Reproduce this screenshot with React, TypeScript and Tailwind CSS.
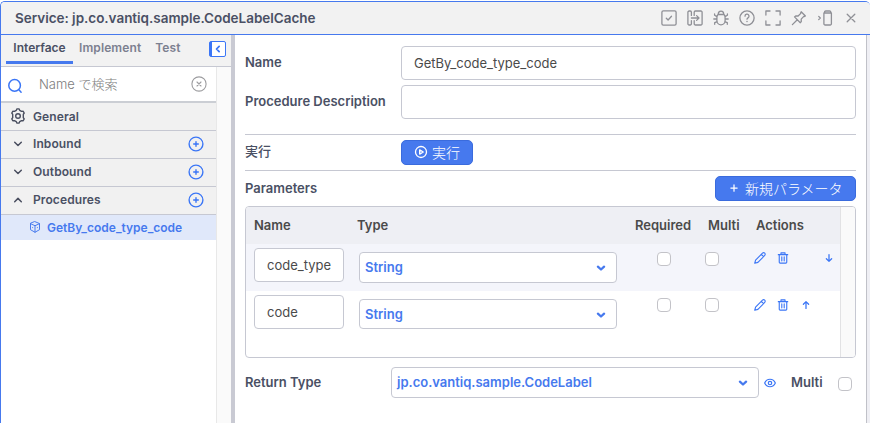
import React from "react";

type IconProps = { children: React.ReactNode; className?: string; size?: number; sw?: number };

function Icon({ children, className = "", size = 16, sw = 1.3 }: IconProps) {
  return (
    <svg
      viewBox="0 0 16 16"
      width={size}
      height={size}
      fill="none"
      stroke="currentColor"
      strokeWidth={sw}
      strokeLinecap="round"
      strokeLinejoin="round"
      className={"shrink-0 " + className}
    >
      {children}
    </svg>
  );
}

function HeaderIcons() {
  return (
    <div className="flex items-center gap-2.5 text-[#8f9096]">
      <Icon>
        <rect x="0.9" y="0.9" width="14.2" height="14.2" rx="1.4" />
        <path d="M5.3 8.2l1.8 1.8 3.4-3.8" />
      </Icon>
      <Icon>
        <path d="M4.4 5.400V2.200A1.200 1.200 0 0 0 3.200 1H2.100A1.200 1.200 0 0 0 .9 2.200v11.600A1.200 1.200 0 0 0 2.100 15h1.100a1.200 1.200 0 0 0 1.200-1.200v-3.200" />
        <path d="M7.200 5.400V2.200A1.200 1.200 0 0 1 8.400 1h5.500a1.200 1.200 0 0 1 1.200 1.200v11.600a1.200 1.200 0 0 1-1.200 1.200H8.400a1.200 1.200 0 0 1-1.200-1.200v-3.200M4.400 8H12M9.600 5.600 12 8l-2.400 2.400" />
      </Icon>
      <Icon>
        <path d="M5.200 4.500a2.800 3.300 0 0 1 5.600 0M5 4.500h6a4 4 0 0 1 1.100 3v3.200a4.100 4.100 0 0 1-8.200 0V7.500A4 4 0 0 1 5 4.500zM3.900 6.600 1.600 5.300V3.900M12.100 6.600l2.300-1.300V3.900M3.900 9H.8M12.100 9h3.100M4.200 11.600l-2.500 1v1.700M11.800 11.600l2.500 1v1.700" />
      </Icon>
      <Icon>
        <circle cx="8" cy="8" r="7.100" />
        <path d="M6 6.200a2 2 0 1 1 3 1.700c-.6.400-1 .7-1 1.300" />
        <path d="M8 11.400v.1" strokeWidth="1.500" />
      </Icon>
      <Icon>
        <path d="M.9 5V1H5M11 1h4.100v4M15.100 11v4H11M5 15H.9v-4" />
      </Icon>
      <Icon>
        <path d="M10.200 1.800l4.200 4.200-1 .5-.6-.1-2.600 2.700.1 2.400-1 1.200-5.800-5.800 1.200-1 2.400.1 2.700-2.600-.1-.6zM6.300 9.800 1.400 14.600" />
      </Icon>
      <Icon>
        <path d="M6.900 3h7.500v10.800a1.200 1.200 0 0 1-1.200 1.200H8.100a1.200 1.200 0 0 1-1.200-1.200zM7.600 3V2.100A1.100 1.100 0 0 1 8.700 1h3.900a1.100 1.100 0 0 1 1.100 1.100V3M1.700 6.400 3.300 8 1.700 9.600" />
      </Icon>
      <Icon>
        <path d="M4.200 4.200l7.600 7.600M11.800 4.200l-7.600 7.600" />
      </Icon>
    </div>
  );
}

function CirclePlus() {
  return (
    <Icon className="-mt-px text-[#3b76f6]" sw={1.4}>
      <circle cx="8" cy="8" r="6.900" />
      <path d="M8 5.700v4.600M5.700 8h4.600" />
    </Icon>
  );
}

function Section({ label, open }: { label: string; open?: boolean }) {
  return (
    <div className="flex h-7 items-center border-b border-[#c6c8d2] bg-[#f1f1f1] pl-[9px] pr-3">
      <Icon className="-mt-0.5 text-[#4a4f60]" sw={1.5}>
        {open ? <path d="M4.700 9.700 8 6.400l3.300 3.300" /> : <path d="M4.700 6.200 8 9.500l3.300-3.300" />}
      </Icon>
      <span className="-mt-px ml-[7px] flex-1 text-[12px] font-semibold tracking-[0.1px]">{label}</span>
      <CirclePlus />
    </div>
  );
}

function Check({ className = "" }: { className?: string }) {
  return <span className={"block size-[14px] shrink-0 rounded-[4px] border border-[#c3c3c8] bg-white " + className} />;
}

function Select({ value, className }: { value: string; className: string }) {
  return (
    <div className={"flex items-center justify-between rounded-[4px] border border-[#c6c8d2] bg-white pl-[5px] text-[13px] font-semibold text-[#4679ee] " + className}>
      <span>{value}</span>
      <Icon sw={2.300} className="mr-[7px]">
        <path d="M4.900 6.700 8 9.500l3.100-2.800" />
      </Icon>
    </div>
  );
}

function Pencil() {
  return (
    <Icon size={12} sw={1.500} className="text-[#3b76f6]">
      <path d="M1 15l1.100-4.300L11.300 1.600a2.100 2.100 0 0 1 3 3L5.200 13.800zM9.800 3.200l2.900 2.900" />
    </Icon>
  );
}

function Trash() {
  return (
    <Icon size={12} sw={1.500} className="text-[#3b76f6]">
      <path d="M1.700 3.500h12.600M5.300 3.300V1.200h5.400v2.100M3 3.700v10a1.200 1.200 0 0 0 1.200 1.200h7.600a1.200 1.200 0 0 0 1.200-1.200v-10M6.400 6.500v5.300M9.600 6.500v5.300" />
    </Icon>
  );
}

function ParamRow({ name, down }: { name: string; down?: boolean }) {
  return (
    <div className={"flex items-start pl-2 pt-1 " + (down ? "h-[47px] bg-[#f4f5fb]" : "h-[66px]")}>
      <div className="flex h-[34px] w-[90px] items-center rounded-[4px] border border-[#c6c8d2] bg-white pl-3 pt-px text-[13px] font-normal text-[#4a4a4a]">
        {name}
      </div>
      <Select value="String" className={"ml-[15px] mt-1 w-[258px] " + (down ? "h-[31px]" : "h-[30px] pt-px")} />
      <Check className={"ml-10 " + (down ? "mt-1" : "mt-[3px]")} />
      <Check className={"ml-[34px] " + (down ? "mt-1" : "mt-[3px]")} />
      <div className="ml-[34.5px] mt-[3px] flex w-[82px] items-center gap-[11px]">
        <Pencil />
        <Trash />
        <Icon size={12} sw={1.700} className={"text-[#3b76f6] " + (down ? "ml-[23px] mt-px" : "mt-px")}>
          {down ? <path d="M8 3.400v9M4.500 9 8 12.500 11.500 9" /> : <path d="M8 12.500v-9M4.500 7 8 3.500 11.500 7" />}
        </Icon>
      </div>
    </div>
  );
}

function Sidebar() {
  return (
    <aside className="flex w-[230px] shrink-0 flex-col">
      <div className="flex h-8 shrink-0 items-start border-b border-[#c6c8d2] bg-[#f2f2f2] pl-[5px] pr-[5px] text-[12px] font-semibold text-[#7c8090]">
        <div className="flex h-[29px] w-[67px] justify-center border-b-[3px] border-[#4679ee] pt-1 text-[#4a5064]">Interface</div>
        <span className="ml-[6px] pt-1 tracking-[0.1px]">Implement</span>
        <span className="ml-[14px] pt-1 tracking-[0.1px]">Test</span>
        <div className="ml-auto mt-[6px] flex h-4 w-[17px] items-center rounded-[2px] border border-[#3b76f6] bg-white text-[#3b76f6]">
          <span className="h-full w-[4px] bg-[#3b76f6]" />
          <Icon size={14} sw={2} className="-ml-px"><path d="M9.300 5 6.300 8l3 3" /></Icon>
        </div>
      </div>
      <div className="flex min-h-0 flex-1">
        <div className="w-[215px]">
          <div className="flex h-9 items-center border-b-2 border-[#cbced4] pl-[6px] pr-[9px]">
            <Icon className="mt-1 text-[#3b76f6]" sw={1.500}>
              <circle cx="7.600" cy="7.400" r="5.800" />
              <path d="M11.900 11.800l2.200 2.400" />
            </Icon>
            <span className="ml-4 flex-1 pt-px text-[13px] font-light text-[#7d7d7d]">Name で検索</span>
            <Icon className="text-[#9d9da0]" sw={1.100}>
              <circle cx="8" cy="8" r="7.100" />
              <path d="M6 6l4 4M10 6l-4 4" />
            </Icon>
          </div>
          <div className="flex h-7 items-center border-b border-[#c6c8d2] bg-[#f1f1f1] pl-[9px]">
            <Icon sw={1.400} className="-mt-px text-[#4a4f60]">
              <path d="M6.300 2.300 7 .9h2l.7 1.400 1.900 1.100 1.600-.1 1 1.700-.9 1.300v3.400l.9 1.300-1 1.700-1.600-.1-1.900 1.100L9 15.100H7l-.7-1.400-1.900-1.100-1.600.1-1-1.700.9-1.300V6.300l-.9-1.300 1-1.700 1.600.1z" />
              <circle cx="8" cy="8" r="2.300" />
            </Icon>
            <span className="ml-[7px] text-[12px] font-semibold tracking-[0.1px]">General</span>
          </div>
          <Section label="Inbound" />
          <Section label="Outbound" />
          <Section label="Procedures" open />
          <div className="flex h-[25px] items-center bg-[#e0e8fa] pl-7 text-[#4679ee]">
            <Icon size={12} sw={1.300} className="-mt-0.5">
              <path d="M8 .9l6 2.500v8.200L8 15l-6-3.400V3.400zM2.200 3.600 8 6.300l5.800-2.700M8 6.300V15M4.800 8.800v.1M11.200 8.800v.1" />
            </Icon>
            <span className="ml-[6px] pt-px text-[12px] font-semibold">GetBy_code_type_code</span>
          </div>
        </div>
        <div className="flex-1 border-l border-[#e8e8e8] bg-[#fafafa]" />
      </div>
    </aside>
  );
}

export default function App() {
  return (
    <div className="h-[423px] w-[870px] overflow-hidden bg-white pt-px font-['Inter','Noto_Sans_CJK_JP',sans-serif] text-[13px] text-[#4a5064]">
      <div className="flex h-[422px] flex-col overflow-hidden rounded-t-[5px] border-l border-t border-[#4679ee]">
        <header className="flex h-[33px] shrink-0 items-center justify-between border-b border-[#4679ee] bg-[#f2f2f2] pl-[14px] pr-[11px]">
          <h1 className="text-[13.5px] font-semibold tracking-[-0.025px]">Service: jp.co.vantiq.sample.CodeLabelCache</h1>
          <HeaderIcons />
        </header>
        <div className="flex min-h-0 flex-1">
          <Sidebar />
          <div className="w-1 shrink-0 bg-[#c9cad3]" />
          <main className="w-[631px] shrink-0 pl-[10px] pr-[10px] pt-[11px] font-semibold">
            <div className="flex h-[34px] items-center">
              <span className="w-[156px]">Name</span>
              <div className="flex h-full flex-1 items-center rounded-[4px] border border-[#c6c8d2] pl-3 pt-px font-normal text-[#4a4a4a]">GetBy_code_type_code</div>
            </div>
            <div className="mt-[5px] flex h-[34px] items-center">
              <span className="w-[156px]">Procedure Description</span>
              <div className="h-full flex-1 rounded-[4px] border border-[#c6c8d2]" />
            </div>
            <div className="mt-[15px] flex h-[37px] items-center border-y border-[#c6c8d2]">
              <span className="w-[156px] pb-px font-medium">実行</span>
              <button className="flex h-[25px] w-[72px] items-center rounded-[5px] border border-[#3a6bdd] bg-[#4679ee] pl-3 text-[14px] font-light text-white">
                <Icon size={14} sw={1.500} className="-mt-px"><circle cx="8" cy="8" r="6.300" /><path d="M6.500 5.600v4.800L10.600 8z" /></Icon>
                <span className="ml-[4px]">実行</span>
              </button>
            </div>
            <div className="mt-[5px] flex h-[25px] items-center justify-between">
              <span>Parameters</span>
              <button className="flex h-[25px] w-[141px] items-center rounded-[5px] border border-[#3a6bdd] bg-[#4679ee] pl-[13px] text-[14px] font-light text-white">
                <Icon size={10} sw={2} className="-mt-0.5"><path d="M8 3v10M3 8h10" /></Icon>
                <span className="ml-[6px]">新規パラメータ</span>
              </button>
            </div>
            <div className="mt-[5px] flex h-[152px] overflow-hidden rounded-[4px] border border-[#c6c8d2]">
              <div className="w-[594px]">
                <div className="flex h-[37px] items-center bg-[#eeeff4] pl-2 text-[#4a4a4a]">
                  <span className="w-[103px]">Name</span>
                  <span className="w-[278px]">Type</span>
                  <span className="w-[73px]">Required</span>
                  <span className="w-[48px]">Multi</span>
                  <span>Actions</span>
                </div>
                <ParamRow name="code_type" down />
                <ParamRow name="code" />
              </div>
              <div className="flex-1 border-l border-[#e2e2e4] bg-[#fafafa]" />
            </div>
            <div className="mt-[9px] flex h-[31px] items-center">
              <span className="w-[146px]">Return Type</span>
              <Select value="jp.co.vantiq.sample.CodeLabel" className="h-[31px] w-[368px]" />
              <Icon size={12} sw={1.600} className="ml-[5px] text-[#3b76f6]">
                <path d="M.9 8C2.300 4.700 4.900 3 8 3s5.700 1.700 7.100 5c-1.400 3.300-4 5-7.100 5S2.300 11.300.9 8z" />
                <circle cx="8" cy="8" r="2.300" />
              </Icon>
              <span className="ml-[15px] w-[47px]">Multi</span>
              <Check className="mt-[3px]" />
            </div>
          </main>
          <div className="flex-1 border-l border-[#c0c1c8] bg-[#efeff4]" />
        </div>
      </div>
    </div>
  );
}
